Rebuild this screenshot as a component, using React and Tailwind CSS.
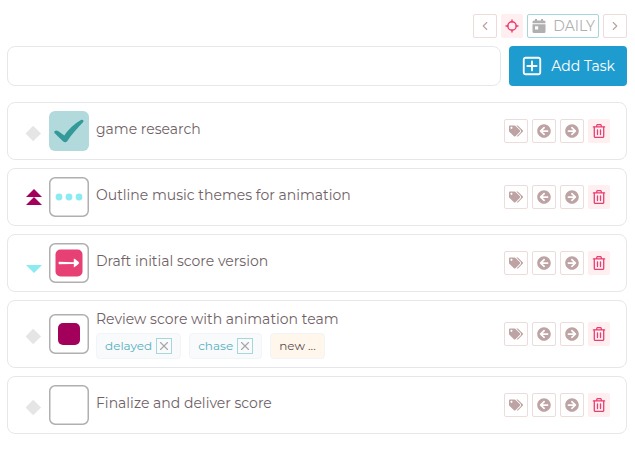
import React from "react";
import { CgAddR } from "react-icons/cg";
import { FaTags, FaArrowCircleLeft, FaArrowCircleRight } from "react-icons/fa";
import { ChevronLeft, ChevronRight, X } from "lucide-react";

const tasks = [
  { id: 1, name: "game research", priority: "normal", status: "done" },
  {
    id: 2,
    name: "Outline music themes for animation",
    priority: "high",
    status: "progress",
  },
  {
    id: 3,
    name: "Draft initial score version",
    priority: "low",
    status: "moved",
  },
  {
    id: 4,
    name: "Review score with animation team",
    priority: "normal",
    status: "stopped",
    tags: ["delayed", "chase"],
  },
  {
    id: 5,
    name: "Finalize and deliver score",
    priority: "normal",
    status: "empty",
  },
];

const TrashIcon = () => (
  <svg
    viewBox="0 0 16 16"
    className="w-4 h-4 shrink-0"
    fill="none"
    stroke="currentColor"
    strokeWidth="1.3"
    strokeLinecap="round"
    strokeLinejoin="round"
  >
    <path d="M2.4 3.9H13.6M5.4 3.7 6.1 1.6H9.9L10.6 3.7" />
    <path d="M3.3 4.2V13.4Q3.3 14.4 4.3 14.4H11.7Q12.7 14.4 12.7 13.4V4.2" />
    <path d="M6.5 6.8V11.6M9.5 6.8V11.6" />
  </svg>
);

const TargetIcon = () => (
  <svg
    viewBox="0 0 16 16"
    className="w-4 h-4 shrink-0"
    fill="none"
    stroke="currentColor"
    strokeWidth="1.4"
    strokeLinecap="round"
  >
    <circle cx="8" cy="8" r="4.2" />
    <path d="M8 2V4M8 12V14M2 8H4M12 8H14" />
  </svg>
);

const CalendarIcon = () => (
  <svg viewBox="0 0 16 16" className="w-4 h-4 shrink-0" fill="currentColor">
    <path d="M4 1H6V2.5H10V1H12V2.5H13Q14.5 2.5 14.5 4V5.2H1.5V4Q1.5 2.5 3 2.5H4Z" />
    <path
      fillRule="evenodd"
      d="M1.5 6.2H14.5V13.5Q14.5 15 13 15H3Q1.5 15 1.5 13.5ZM4 8.2V11.4H7.2V8.2Z"
    />
  </svg>
);

const PriorityIcon = ({ priority }) => (
  <svg viewBox="0 0 16 24" className="w-4 h-6">
    {priority === "normal" && (
      <path d="M7.2 6.8 15 14.5 7.2 22.2 -0.5 14.5Z" fill="#e5e5e5" />
    )}
    {priority === "high" && (
      <path d="M8 4 16 12H0ZM8 12 16 20H0Z" fill="#a3005c" />
    )}
    {priority === "low" && <path d="M0 14H16L8 22Z" fill="#8ceaf2" />}
  </svg>
);

const StatusIcon = ({ status }) => (
  <svg viewBox="0 0 40 40" className="w-10 h-10 shrink-0">
    {status === "done" ? (
      <rect width="40" height="40" rx="6" fill="#b2d9dc" />
    ) : (
      <rect
        x="0.75"
        y="0.75"
        width="38.5"
        height="38.5"
        rx="5.5"
        fill="#fff"
        stroke="#b0b0b0"
        strokeWidth="1.5"
      />
    )}
    {status === "done" && (
      <path
        d="M5.4 20.5C6.5 19.2 8 19.4 9.4 20.3L15.3 24.4C19.4 18.6 25.5 12.5 32 9C33.8 8.4 35.2 9.6 34.2 11C28.6 16.6 22.8 23.4 18.2 30.2C16.8 31.7 15.2 31.4 14 30.2L6.2 22.8C5.4 22 5 21.2 5.4 20.5Z"
        fill="#339999"
      />
    )}
    {status === "progress" && (
      <g fill="#8ceaf2">
        <circle cx="10" cy="20" r="3.4" />
        <circle cx="20" cy="20" r="3.4" />
        <circle cx="30" cy="20" r="3.4" />
      </g>
    )}
    {status === "moved" && (
      <>
        <rect x="6.5" y="6.5" width="27" height="27" rx="5" fill="#e64074" />
        <path
          d="M10 18.8 24.8 19.2V15.6C26.8 16.6 29 18.2 30.3 20C29 21.8 26.8 23.4 24.8 24.4V20.9L10 21.2C9.4 20.6 9.4 19.4 10 18.8Z"
          fill="#fff"
        />
      </>
    )}
    {status === "stopped" && (
      <rect x="9" y="9" width="22" height="22" rx="5" fill="#a3005c" />
    )}
  </svg>
);

const IconButton = ({ label, children }) => (
  <button
    aria-label={label}
    className="w-6 h-6 flex items-center justify-center rounded-xs border border-[#ecdcdc] text-[#bda3a3] bg-white cursor-pointer"
  >
    {children}
  </button>
);

const PinkButton = ({ label, children }) => (
  <button
    aria-label={label}
    className="w-[22px] h-6 flex items-center justify-center rounded-xs bg-[#ffeff0] text-[#e83e74] cursor-pointer"
  >
    {children}
  </button>
);

const Tag = ({ name }) => (
  <div className="h-[26px] px-2 flex items-center gap-1 rounded-sm border border-slate-100 bg-slate-50 text-xs text-[#55b0bd]">
    <span>{name}</span>
    <button
      aria-label={`Remove ${name}`}
      className="w-4 h-4 flex items-center justify-center border border-[#a6d6d9] text-[#a8a8a8] cursor-pointer"
    >
      <X className="w-3.5 h-3.5 shrink-0" strokeWidth={2} />
    </button>
  </div>
);

const TaskRow = ({ task }) => (
  <li className="flex items-center py-2 pl-[18px] pr-4 rounded-lg border border-gray-200">
    <button aria-label={`Priority: ${task.priority}`} className="mr-[7px]">
      <PriorityIcon priority={task.priority} />
    </button>
    <button aria-label={`Status: ${task.status}`}>
      <StatusIcon status={task.status} />
    </button>
    <div className="flex-1 min-w-0 pl-[7px]">
      <p className="text-sm leading-5 mb-1 text-[#6f6267]">{task.name}</p>
      {task.tags && (
        <div className="flex gap-2">
          {task.tags.map((tag) => (
            <Tag key={tag} name={tag} />
          ))}
          <button className="h-[26px] px-2 rounded-sm border border-slate-100 bg-[#fff7eb] text-xs text-[#5f5055] cursor-pointer">
            new ...
          </button>
        </div>
      )}
    </div>
    <div className="flex gap-1">
      <IconButton label="Tags">
        <FaTags className="w-3.5 h-3.5" />
      </IconButton>
      <IconButton label="Move back">
        <FaArrowCircleLeft className="w-3.5 h-3.5" />
      </IconButton>
      <IconButton label="Move forward">
        <FaArrowCircleRight className="w-3.5 h-3.5" />
      </IconButton>
      <PinkButton label="Delete">
        <TrashIcon />
      </PinkButton>
    </div>
  </li>
);

const App = () => {
  return (
    <div className="pt-3.5 pl-[7px] pr-2 pb-4 bg-white font-['Montserrat','Inter',sans-serif]">
      <div className="flex justify-end gap-1">
        <IconButton label="Previous">
          <ChevronLeft className="w-3.5 h-3.5" />
        </IconButton>
        <PinkButton label="Today">
          <TargetIcon />
        </PinkButton>
        <button className="h-6 px-[3px] flex items-center gap-1.5 rounded-xs border border-[#a6d6d9] text-sm text-[#b0b0b0] cursor-pointer">
          <CalendarIcon />
          DAILY
        </button>
        <IconButton label="Next">
          <ChevronRight className="w-3.5 h-3.5" />
        </IconButton>
      </div>

      <form
        className="flex gap-2 mt-2"
        onSubmit={(e) => e.preventDefault()}
      >
        <input
          type="text"
          aria-label="New task"
          className="flex-1 min-w-0 h-10 px-3 rounded-lg border border-gray-200 text-sm outline-none"
        />
        <button className="h-10 px-3 flex items-center gap-2 rounded-sm bg-[#1f9ccf] text-white text-sm cursor-pointer">
          <CgAddR className="w-[22px] h-[22px]" />
          Add Task
        </button>
      </form>

      <ul className="mt-4 space-y-2">
        {tasks.map((task) => (
          <TaskRow key={task.id} task={task} />
        ))}
      </ul>
    </div>
  );
};

export default App;
